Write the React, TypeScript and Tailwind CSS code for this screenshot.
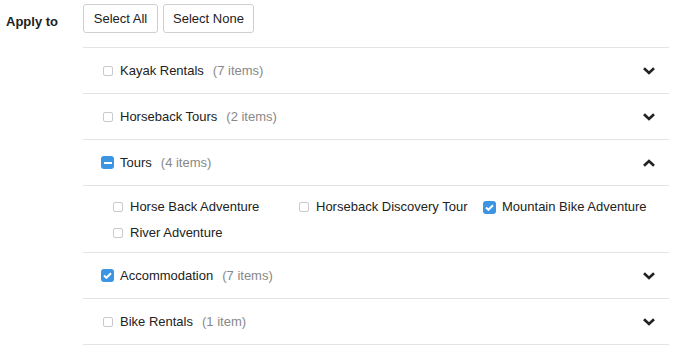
import React from 'react';

type Check = 'none' | 'all' | 'some';

interface Category {
  name: string;
  count: string;
  state: Check;
  open?: boolean;
  items?: { name: string; checked: boolean }[];
}

const categories: Category[] = [
  { name: 'Kayak Rentals', count: '(7 items)', state: 'none' },
  { name: 'Horseback Tours', count: '(2 items)', state: 'none' },
  {
    name: 'Tours',
    count: '(4 items)',
    state: 'some',
    open: true,
    items: [
      { name: 'Horse Back Adventure', checked: false },
      { name: 'Horseback Discovery Tour', checked: false },
      { name: 'Mountain Bike Adventure', checked: true },
      { name: 'River Adventure', checked: false },
    ],
  },
  { name: 'Accommodation', count: '(7 items)', state: 'all' },
  { name: 'Bike Rentals', count: '(1 item)', state: 'none' },
];

const Box: React.FC<{ state: Check }> = ({ state }) => {
  if (state === 'none') {
    return (
      <span className="w-[13px] h-[13px] flex items-center justify-center shrink-0">
        <span className="w-[10px] h-[10px] rounded-[2px] border border-[#c9c9cf] bg-white" />
      </span>
    );
  }
  return (
    <span className="w-[13px] h-[13px] rounded-[3px] bg-[#3b95e3] flex items-center justify-center shrink-0">
      {state === 'all' ? (
        <svg width="9" height="7" viewBox="0 0 9 7">
          <path d="M1 3.6 L3.4 5.8 L8 1.2" fill="none" stroke="white" strokeWidth="2" />
        </svg>
      ) : (
        <span className="w-[8px] h-[2px] bg-white" />
      )}
    </span>
  );
};

const Chevron: React.FC<{ up?: boolean }> = ({ up }) => (
  <svg width="12" height="8" viewBox="0 0 12 8" className={up ? 'rotate-180' : ''}>
    <path d="M1 1.2 L6 6 L11 1.2" fill="none" stroke="#222" strokeWidth="2.6" />
  </svg>
);

export default function App() {
  return (
    <div className="w-[679px] h-[353px] bg-white flex text-[13px] text-[#222]" style={{ fontFamily: '"Liberation Sans", Arial, sans-serif' }}>
      <div className="w-[83px] pl-[6px] pt-[12px] font-bold">Apply to</div>
      <div className="w-[586px] pt-[4px]">
        <div className="flex gap-[5px]">
          <button className="h-[29px] w-[75px] border border-[#cfcfcf] rounded-[3px] bg-white">Select All</button>
          <button className="h-[29px] w-[91px] border border-[#cfcfcf] rounded-[3px] bg-white">Select None</button>
        </div>
        <div className="mt-[14px] border-b border-[#e3e3e3]">
          {categories.map((c) => (
            <div key={c.name}>
              <div className="h-[46px] border-t border-[#e3e3e3] flex items-center pl-[18px] pr-[14px]">
                <Box state={c.state} />
                <span className="ml-[6px]">{c.name}</span>
                <span className="ml-[9px] text-[#888]">{c.count}</span>
                <span className="ml-auto flex">
                  <Chevron up={c.open} />
                </span>
              </div>
              {c.open && c.items && (
                <div className="border-t border-[#e3e3e3] grid grid-cols-[186px_186px_186px] pl-[28px] pt-[8px] pb-[6px]">
                  {c.items.map((it) => (
                    <div key={it.name} className="h-[26px] flex items-center">
                      <Box state={it.checked ? 'all' : 'none'} />
                      <span className="ml-[6px]">{it.name}</span>
                    </div>
                  ))}
                </div>
              )}
            </div>
          ))}
        </div>
      </div>
    </div>
  );
}
